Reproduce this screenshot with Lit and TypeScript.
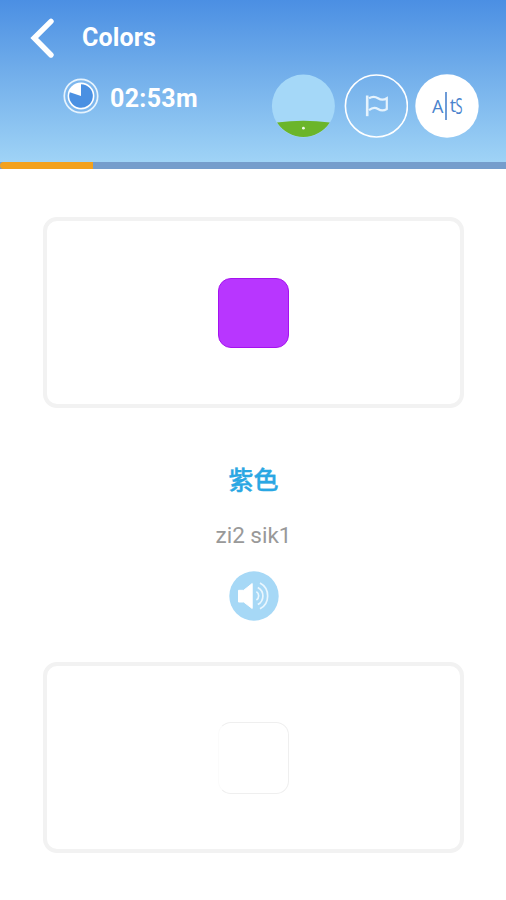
import { LitElement, html, css } from "lit";
import { customElement, property } from "lit/decorators.js";

@customElement("lesson-header")
class LessonHeader extends LitElement {
  @property() heading = "";
  @property() time = "";
  @property({ type: Number }) progress = 0;

  static styles = css`
    :host { display: block; color: #fff; font: 700 25px/30px Roboto, sans-serif; }
    .sky {
      height: 162px;
      box-sizing: border-box;
      background: linear-gradient(#4b8fe3 0%, #6facea 42%, #9fd3f6 100%);
    }
    svg { display: block; }
    .top { display: flex; align-items: center; padding: 17px 0 0 28px; height: 42px; gap: 26px; letter-spacing: 0.15px; }
    .tools { display: flex; align-items: center; height: 64px; padding: 15px 28px 0 63px; }
    .clock { margin-top: -21px; margin-right: 11px; }
    .time { margin-top: -14px; flex: 1; letter-spacing: 0.3px; }
    .buttons { display: flex; gap: 8px; }
    .track { height: 7px; background: #759dcc; }
    .bar { height: 7px; background: #f3a11d; border-radius: 4px 0 0 4px; }
    .glyph { font-family: "Open Sans", sans-serif; font-weight: 400; font-size: 18px; }
  `;

  render() {
    return html`
      <div class="sky">
        <div class="top">
          <svg width="28" height="42" viewBox="0 0 28 42" fill="none" stroke="#fff" stroke-width="5.4" stroke-linecap="round">
            <path d="M23 4.4 6.2 21 23 38" />
          </svg>
          <span>${this.heading}</span>
        </div>
        <div class="tools">
          <svg class="clock" width="36" height="36" viewBox="0 0 36 36">
            <circle cx="18" cy="18" r="16.7" fill="#7db7ee" stroke="#e6f3fd" stroke-width="1.7" />
            <circle cx="18" cy="18" r="13.4" fill="#fff" />
            <path d="M18 18V6.2A11.8 11.8 0 1 1 6.8 14.3Z" fill="#4a90e2" />
          </svg>
          <span class="time">${this.time}</span>
          <div class="buttons">
            <svg width="64" height="64" viewBox="0 0 64 64">
              <circle cx="32.4" cy="32" r="31.5" fill="#a5d8f8" />
              <path d="M6 48.6Q32.4 45 58.8 48.6A31.5 31.5 0 0 1 6 48.6Z" fill="#6bb52b" />
              <circle cx="32.4" cy="54.2" r="1.4" fill="#f0fae4" />
            </svg>
            <svg width="65" height="64" viewBox="-1 0 65 64" fill="none" stroke="#fff">
              <circle cx="32.4" cy="32" r="31" stroke-width="1.6" />
              <path d="M23.2 21.5V42.2" stroke-width="2.6" stroke="#e5f3fd" />
              <path d="M25 24.2q4.6-2.8 9 0t8.8 0V35q-4.4 2.8-8.8 0t-9 1.2" stroke-width="2.2" stroke="#e5f3fd" />
            </svg>
            <svg width="62" height="64" viewBox="1 0 62 64" fill="#4a83cd" overflow="visible">
              <circle cx="32" cy="32" r="31.7" fill="#fff" />
              <text class="glyph" x="17" y="39.2">A</text>
              <path d="M31 18V46" stroke="#4a83cd" stroke-width="1.6" />
              <text class="glyph" x="34.7" y="38.4">t</text>
              <text class="glyph" x="40.4" y="40" textLength="7" lengthAdjust="spacingAndGlyphs" transform="translate(0 -7) scale(1 1.18)">S</text>
            </svg>
          </div>
        </div>
      </div>
      <div class="track"><div class="bar" style="width:${this.progress}px"></div></div>
    `;
  }
}

@customElement("color-card")
class ColorCard extends LitElement {
  static styles = css`
    :host {
      display: flex; align-items: center; justify-content: center;
      box-sizing: border-box; width: 421px; height: 191px;
      border: 4px solid #f2f2f2; border-radius: 14px; background: #fff;
    }
    .swatch { box-sizing: border-box; width: 71px; height: 70px; border-radius: 13px; }
    .purple { background: #b836ff; border: 1px solid #a512ef; }
    .white { height: 72px; background: #fff; border: 1px solid #efefef; border-left-color: #fbfbfb; }
  `;
  @property() color = "white";
  render() {
    return html`<div class="swatch ${this.color}"></div>`;
  }
}

@customElement("app-root")
class AppRoot extends LitElement {
  static styles = css`
    :host { display: block; height: 900px; overflow: hidden; background: #fff; }
    main { display: flex; flex-direction: column; align-items: center; padding: 48px 0 0 1px; }
    .word { margin-top: 52px; font: 500 25px/36px "Noto Sans CJK TC", sans-serif; color: #2aa7e3; -webkit-text-stroke: 0.4px #2aa7e3; }
    .reading { margin-top: 25px; font: 400 22.5px/28px Roboto, sans-serif; color: #999; }
    .audio { display: block; margin: 22px 0 41px; }
  `;
  render() {
    return html`
      <lesson-header heading="Colors" time="02:53m" .progress=${93}></lesson-header>
      <main>
        <color-card color="purple"></color-card>
        <div class="word">紫色</div>
        <div class="reading">zi2 sik1</div>
        <svg class="audio" width="50" height="50" viewBox="0 0 50 50" fill="none" stroke="#fff">
          <circle cx="25" cy="25" r="24.7" fill="#a6d8f6" stroke="none" />
          <path d="M9.5 19.3h5.2L23.2 12.5V37.5L14.7 31H9.5Z" fill="#fff" stroke-width="1" stroke-linejoin="round" />
          <path d="M27.4 20.6a5 5 0 0 1 0 8.4M28.8 16.4a9.8 9.8 0 0 1 0 17.2M31 12a14.7 14.7 0 0 1 0 25.8" stroke-width="1.7" stroke="#e9f6fe" />
        </svg>
        <color-card color="white"></color-card>
      </main>
    `;
  }
}
